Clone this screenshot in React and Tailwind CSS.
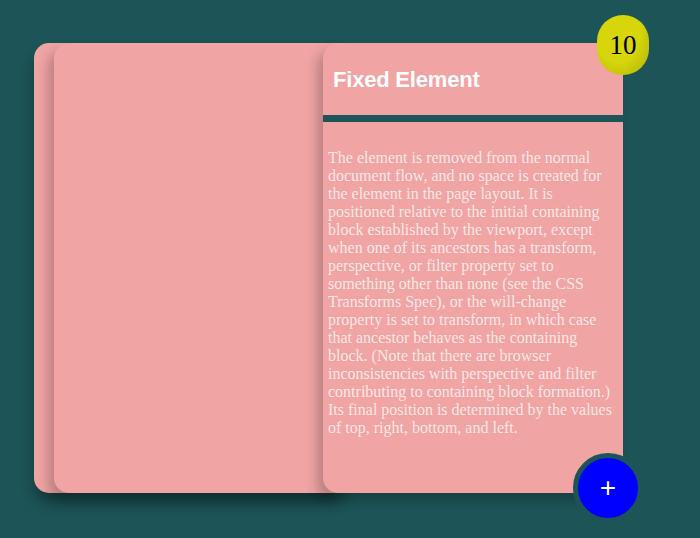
const text =
  "The element is removed from the normal document flow, and no space is created for the element in the page layout. It is positioned relative to the initial containing block established by the viewport, except when one of its ancestors has a transform, perspective, or filter property set to something other than none (see the CSS Transforms Spec), or the will-change property is set to transform, in which case that ancestor behaves as the containing block. (Note that there are browser inconsistencies with perspective and filter contributing to containing block formation.) Its final position is determined by the values of top, right, bottom, and left.";

const App = () => {
  return (
    <div className="min-h-[538px] bg-[#1d5457] pl-[34px] pt-[43px]">
      <div className="relative flex h-[450px] w-[589px]">
        {/* stacked cards */}
        <div className="w-[300px] shrink-0 rounded-l-[15px] bg-[#f0a4a4] shadow-[0_10px_14px_rgba(0,0,0,0.3)]" />
        <div className="ml-[-280px] w-[300px] shrink-0 rounded-l-[15px] bg-[#f0a4a4] shadow-[-6px_8px_12px_rgba(0,0,0,0.22)]" />
        <div className="ml-[-31px] flex w-[300px] shrink-0 flex-col rounded-l-[15px] bg-[#f0a4a4] shadow-[-6px_8px_12px_rgba(0,0,0,0.22)]">
          <div className="flex h-[79px] items-center border-b-[7px] border-[#1d5457] pl-[10px]">
            <h2 className="font-['Liberation_Sans',Arial,sans-serif] text-[22px] font-bold tracking-[-0.2px] text-white">
              Fixed Element
            </h2>
          </div>
          <p className="px-[5px] pt-[27px] font-['Liberation_Serif','Times_New_Roman',serif] text-[16px] leading-[18px] text-white/75">
            {text}
          </p>
        </div>

        {/* counter badge */}
        <div className="absolute right-[-26px] top-[-28px] flex h-[60px] w-[52px] items-center justify-center rounded-[26px] bg-[radial-gradient(ellipse_at_40%_30%,#d6d60a_50%,#b0b008)] font-['Liberation_Serif',serif] text-[27px] text-black">
          10
        </div>

        {/* add button */}
        <button className="absolute right-[-20px] bottom-[-30px] flex h-[70px] w-[70px] items-center justify-center rounded-full border-[5px] border-[#1d5457] bg-[#0000ff] font-['Liberation_Sans',sans-serif] text-[28px] font-light leading-none text-white">
          +
        </button>
      </div>
    </div>
  );
};

export default App;
